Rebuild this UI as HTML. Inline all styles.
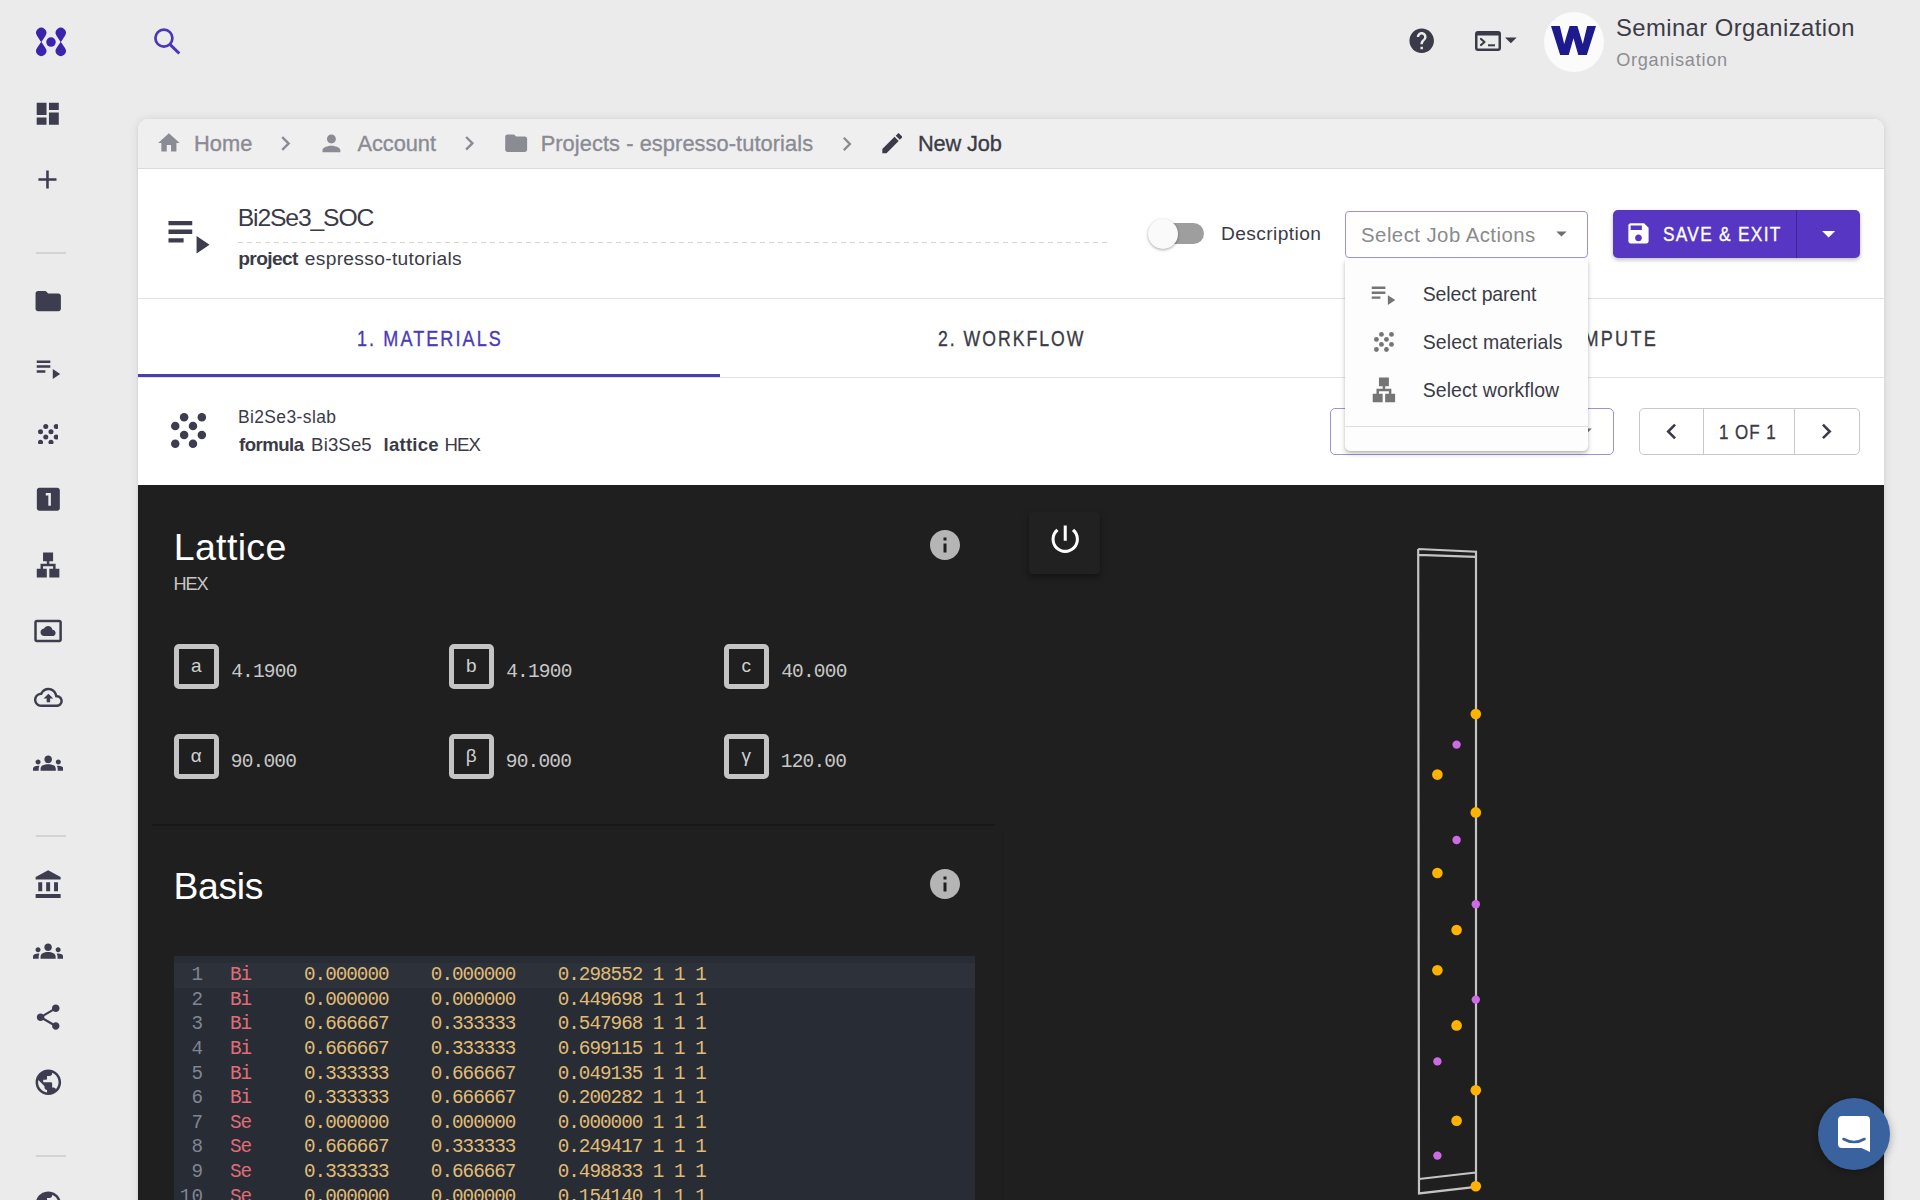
<!DOCTYPE html>
<html><head><meta charset="utf-8">
<style>
html,body{margin:0;padding:0;}
body{width:1920px;height:1200px;overflow:hidden;background:#ebebeb;position:relative;font-family:'Liberation Sans',sans-serif;}
.t{position:absolute;white-space:pre;line-height:1;}
.ic{position:absolute;display:block;}
.abs{position:absolute;}
#card{position:absolute;left:138px;top:119px;width:1746px;height:1100px;background:#fff;border-radius:10px 10px 0 0;box-shadow:0 0 10px rgba(0,0,0,0.10),0 1px 3px rgba(0,0,0,0.06);overflow:hidden;}
#crumb{position:absolute;left:0;top:0;width:1746px;height:49px;background:#efeff0;border-bottom:1px solid #dadada;}
#hdr{position:absolute;left:0;top:50px;width:1746px;height:129px;background:#fff;border-bottom:1px solid #e2e2e2;}
#tabs{position:absolute;left:0;top:180px;width:1746px;height:78px;background:#fff;border-bottom:1px solid #e2e2e2;}
#tabline{position:absolute;left:0;top:255px;width:582px;height:3px;background:#4b3bb5;}
#dark{position:absolute;left:0;top:366px;width:1746px;height:734px;background:#1f1f1f;}
.lbox{position:absolute;width:34.6px;height:34.6px;border:5px solid #c4c4c4;border-radius:5px;color:#d0d0d0;font:19px/34px 'Liberation Sans',sans-serif;text-align:center;}
.cl{position:absolute;left:174px;height:24.6px;white-space:pre;font-family:'Liberation Mono',monospace;font-size:19.3px;letter-spacing:-1.0px;line-height:24.6px;color:#e0bc76;}
.cl .ln{display:inline-block;width:29px;text-align:right;color:#7f8591;margin-right:27px;letter-spacing:0;}
.cl .el{color:#e06c78;}
</style></head><body>
<div id="card">
  <div id="crumb"></div>
  <div id="hdr"></div>
  <div id="tabs"></div>
  <div id="tabline"></div>
  <div id="dark"></div>
</div>
<!-- dashed line under title -->
<div class="abs" style="left:238px;top:242px;width:872px;height:1px;background:repeating-linear-gradient(90deg,#d4d4d4 0 5px,transparent 5px 9px);"></div>
<!-- toggle -->
<div class="abs" style="left:1164px;top:223px;width:40px;height:21px;border-radius:11px;background:#9e9e9e;"></div>
<div class="abs" style="left:1148px;top:218.5px;width:30px;height:30px;border-radius:50%;background:#fafafa;box-shadow:0 1px 3px rgba(0,0,0,0.35);"></div>
<!-- select job actions -->
<div class="abs" style="left:1345px;top:210.5px;width:241px;height:45px;border:1px solid #9b92dc;border-radius:4px;"></div>
<!-- save button -->
<div class="abs" style="left:1612.5px;top:210px;width:247px;height:47.5px;border-radius:5px;background:#5636c2;box-shadow:0 2px 4px rgba(0,0,0,0.25);"></div>
<div class="abs" style="left:1796px;top:210px;width:1px;height:47.5px;background:#3e2596;"></div>
<!-- material select + pagination -->
<div class="abs" style="left:1329.5px;top:407.5px;width:282px;height:45px;border:1px solid #9b92dc;border-radius:5px;"></div>
<div class="abs" style="left:1638.5px;top:407.5px;width:219px;height:45px;border:1px solid #c9c9c9;border-radius:5px;"></div>
<div class="abs" style="left:1703px;top:408px;width:1px;height:46px;background:#c9c9c9;"></div>
<div class="abs" style="left:1794px;top:408px;width:1px;height:46px;background:#c9c9c9;"></div>
<!-- divider dark -->
<div class="abs" style="left:152px;top:824px;width:843px;height:2px;background:#181818;"></div>
<div class="abs" style="left:1002px;top:830px;width:1px;height:370px;background:#1c1c1c;"></div>
<!-- code bg -->
<div class="abs" style="left:174px;top:956px;width:801px;height:260px;background:#282c34;"></div>
<div class="abs" style="left:174px;top:963px;width:801px;height:25px;background:#2c313a;"></div>
<div class="cl" style="top:963.25px"><span class="ln">1</span><span class="el">Bi</span>     <span class="nm">0.000000    0.000000    0.298552 1 1 1</span></div>
<div class="cl" style="top:987.85px"><span class="ln">2</span><span class="el">Bi</span>     <span class="nm">0.000000    0.000000    0.449698 1 1 1</span></div>
<div class="cl" style="top:1012.45px"><span class="ln">3</span><span class="el">Bi</span>     <span class="nm">0.666667    0.333333    0.547968 1 1 1</span></div>
<div class="cl" style="top:1037.05px"><span class="ln">4</span><span class="el">Bi</span>     <span class="nm">0.666667    0.333333    0.699115 1 1 1</span></div>
<div class="cl" style="top:1061.65px"><span class="ln">5</span><span class="el">Bi</span>     <span class="nm">0.333333    0.666667    0.049135 1 1 1</span></div>
<div class="cl" style="top:1086.25px"><span class="ln">6</span><span class="el">Bi</span>     <span class="nm">0.333333    0.666667    0.200282 1 1 1</span></div>
<div class="cl" style="top:1110.85px"><span class="ln">7</span><span class="el">Se</span>     <span class="nm">0.000000    0.000000    0.000000 1 1 1</span></div>
<div class="cl" style="top:1135.45px"><span class="ln">8</span><span class="el">Se</span>     <span class="nm">0.666667    0.333333    0.249417 1 1 1</span></div>
<div class="cl" style="top:1160.05px"><span class="ln">9</span><span class="el">Se</span>     <span class="nm">0.333333    0.666667    0.498833 1 1 1</span></div>
<div class="cl" style="top:1184.65px"><span class="ln">10</span><span class="el">Se</span>     <span class="nm">0.000000    0.000000    0.154140 1 1 1</span></div>
<div class="cl" style="top:1209.25px"><span class="ln">11</span><span class="el">Se</span>     <span class="nm">0.666667    0.333333    0.403556 1 1 1</span></div>
<!-- info icons bg -->
<!-- power button -->
<div class="abs" style="left:1029px;top:512px;width:71px;height:62px;border-radius:4px;background:#212121;box-shadow:0 3px 6px rgba(0,0,0,0.4);"></div>
<svg class="ic" style="left:33.37px;top:99.27px;width:29.47px;height:29.47px;" viewBox="0 0 24 24"><path fill="#3d3d4f" d="M3 13h8V3H3v10zm0 8h8v-6H3v6zm10 0h8V11h-8v10zm0-18v6h8V3h-8z"/></svg>
<svg class="ic" style="left:32.43px;top:164.28px;width:30.94px;height:30.94px;" viewBox="0 0 24 24"><path fill="#3d3d4f" d="M19 13h-6v6h-2v-6H5v-2h6V5h2v6h6v2z"/></svg>
<svg class="ic" style="left:32.65px;top:286.02px;width:30.45px;height:30.45px;" viewBox="0 0 24 24"><path fill="#3d3d4f" d="M10 4H4c-1.1 0-1.99.9-1.99 2L2 18c0 1.1.9 2 2 2h16c1.1 0 2-.9 2-2V8c0-1.1-.9-2-2-2h-8l-2-2z"/></svg>
<svg class="ic" style="left:32.91px;top:352.68px;width:29.68px;height:29.68px;" viewBox="0 0 24 24"><path fill="#3d3d4f" d="M3 10h11v2H3zm0-4h11v2H3zm0 8h7v2H3zm13-1v8l6-4z"/></svg>
<svg class="ic" style="left:32.79px;top:484.04px;width:30.67px;height:30.67px;" viewBox="0 0 24 24"><path fill="#3d3d4f" d="M19 3H5c-1.1 0-2 .9-2 2v14c0 1.1.9 2 2 2h14c1.1 0 2-.9 2-2V5c0-1.1-.9-2-2-2zm-5 14h-2V9h-2V7h4v10z"/></svg>
<svg class="ic" style="left:33.06px;top:550.18px;width:30.13px;height:30.13px;" viewBox="0 0 24 24"><path fill="#3d3d4f" d="M13 22h8v-7h-3v-4h-5V9h3V2H8v7h3v2H6v4H3v7h8v-7H8v-2h8v2h-3z"/></svg>
<svg class="ic" style="left:33.06px;top:616.18px;width:30.14px;height:30.14px;" viewBox="0 0 24 24"><path fill="#3d3d4f" d="M9 16h6.5c1.38 0 2.5-1.12 2.5-2.5S16.88 11 15.5 11h-.05c-.24-1.69-1.69-3-3.45-3-1.4 0-2.6.83-3.16 2.02h-.16C7.17 10.18 6 11.45 6 13c0 1.66 1.34 3 3 3zM21 3H3c-1.11 0-2 .89-2 2v14c0 1.11.89 2 2 2h18c1.11 0 2-.89 2-2V5c0-1.11-.89-2-2-2zm0 16.01H3V4.99h18v14.02z"/></svg>
<svg class="ic" style="left:33.72px;top:682.72px;width:28.81px;height:28.81px;" viewBox="0 0 24 24"><path fill="#3d3d4f" d="M19.35 10.04C18.67 6.59 15.64 4 12 4 9.11 4 6.6 5.64 5.35 8.04 2.34 8.36 0 10.91 0 14c0 3.31 2.69 6 6 6h13c2.76 0 5-2.24 5-5 0-2.64-2.05-4.78-4.65-4.96zM19 18H6c-2.21 0-4-1.79-4-4 0-2.05 1.530-3.76 3.56-3.97l1.07-.11.5-.95C8.080 7.14 9.940 6 12 6c2.62 0 4.88 1.86 5.39 4.43l.3 1.5 1.53.11c1.56.1 2.78 1.41 2.78 2.96 0 1.65-1.35 3-3 3zM8 13h2.55v3h2.9v-3H16l-4-4z"/></svg>
<svg class="ic" style="left:32.69px;top:747.81px;width:30.38px;height:30.38px;" viewBox="0 0 24 24"><path fill="#3d3d4f" d="M12 12.75c1.63 0 3.07.39 4.24.9 1.08.48 1.76 1.56 1.76 2.730V18H6v-1.61c0-1.18.68-2.26 1.76-2.73 1.17-.52 2.61-.91 4.24-.91zM4 13c1.1 0 2-.9 2-2s-.9-2-2-2-2 .9-2 2 .9 2 2 2zm1.13 1.1c-.37-.06-.74-.1-1.13-.1-.99 0-1.93.21-2.78.58C.48 14.9 0 15.62 0 16.43V18h4.5v-1.61c0-.83.23-1.61.63-2.29zM20 13c1.1 0 2-.9 2-2s-.9-2-2-2-2 .9-2 2 .9 2 2 2zm4 3.43c0-.81-.48-1.53-1.22-1.85-.85-.37-1.79-.58-2.78-.58-.39 0-.76.04-1.13.1.4.68.63 1.46.63 2.29V18H24v-1.57zM12 6c1.66 0 3 1.34 3 3s-1.34 3-3 3-3-1.34-3-3 1.34-3 3-3z"/></svg>
<svg class="ic" style="left:33.22px;top:868.97px;width:31.58px;height:31.58px;" viewBox="0 0 24 24"><path fill="#3d3d4f" d="M4 10v7h3v-7H4zm6 0v7h3v-7h-3zM2 22h19v-3H2v3zm14-12v7h3v-7h-3zm-4.5-9L2 6v2h19V6l-9.5-5z"/></svg>
<svg class="ic" style="left:32.80px;top:935.80px;width:30.20px;height:30.20px;" viewBox="0 0 24 24"><path fill="#3d3d4f" d="M12 12.75c1.63 0 3.07.39 4.24.9 1.08.48 1.76 1.56 1.76 2.730V18H6v-1.61c0-1.18.68-2.26 1.76-2.73 1.17-.52 2.61-.91 4.24-.91zM4 13c1.1 0 2-.9 2-2s-.9-2-2-2-2 .9-2 2 .9 2 2 2zm1.13 1.1c-.37-.06-.74-.1-1.13-.1-.99 0-1.93.21-2.78.58C.48 14.9 0 15.62 0 16.43V18h4.5v-1.61c0-.83.23-1.61.63-2.29zM20 13c1.1 0 2-.9 2-2s-.9-2-2-2-2 .9-2 2 .9 2 2 2zm4 3.43c0-.81-.48-1.53-1.22-1.85-.85-.37-1.79-.58-2.78-.58-.39 0-.76.04-1.13.1.4.68.63 1.46.63 2.29V18H24v-1.57zM12 6c1.66 0 3 1.34 3 3s-1.34 3-3 3-3-1.34-3-3 1.34-3 3-3z"/></svg>
<svg class="ic" style="left:32.86px;top:1001.51px;width:30.37px;height:30.37px;" viewBox="0 0 24 24"><path fill="#3d3d4f" d="M18 16.08c-.76 0-1.44.3-1.96.77L8.91 12.7c.05-.23.09-.46.09-.7s-.04-.47-.09-.7l7.05-4.11c.54.5 1.25.81 2.04.81 1.66 0 3-1.34 3-3s-1.34-3-3-3-3 1.34-3 3c0 .24.04.47.09.7L8.04 9.81C7.5 9.31 6.79 9 6 9c-1.66 0-3 1.34-3 3s1.34 3 3 3c.79 0 1.5-.31 2.04-.81l7.12 4.16c-.05.21-.08.43-.08.65 0 1.61 1.31 2.92 2.92 2.92 1.61 0 2.92-1.31 2.92-2.92s-1.31-2.92-2.92-2.92z"/></svg>
<svg class="ic" style="left:32.57px;top:1066.82px;width:30.66px;height:30.66px;" viewBox="0 0 24 24"><path fill="#3d3d4f" d="M12 2C6.48 2 2 6.48 2 12s4.48 10 10 10 10-4.48 10-10S17.52 2 12 2zm-1 17.93c-3.95-.49-7-3.850-7-7.93 0-.62.08-1.21.21-1.79L9 15v1c0 1.1.9 2 2 2v1.93zm6.9-2.54c-.26-.81-1-1.39-1.9-1.39h-1v-3c0-.55-.45-1-1-1H8v-2h2c.55 0 1-.45 1-1V7h2c1.1 0 2-.9 2-2v-.41c2.93 1.19 5 4.06 5 7.41 0 2.08-.8 3.97-2.1 5.39z"/></svg>
<svg class="ic" style="left:32.57px;top:1188.52px;width:30.66px;height:30.66px;" viewBox="0 0 24 24"><path fill="#3d3d4f" d="M12 2C6.48 2 2 6.48 2 12s4.48 10 10 10 10-4.48 10-10S17.52 2 12 2zm-1 17.93c-3.95-.49-7-3.850-7-7.93 0-.62.08-1.21.21-1.79L9 15v1c0 1.1.9 2 2 2v1.93zm6.9-2.54c-.26-.81-1-1.39-1.9-1.39h-1v-3c0-.55-.45-1-1-1H8v-2h2c.55 0 1-.45 1-1V7h2c1.1 0 2-.9 2-2v-.41c2.93 1.19 5 4.06 5 7.41 0 2.08-.8 3.97-2.1 5.39z"/></svg>
<div class="abs" style="left:36px;top:252px;width:30px;height:1.5px;background:#d3d3d3"></div>
<div class="abs" style="left:36px;top:835px;width:30px;height:1.5px;background:#d3d3d3"></div>
<div class="abs" style="left:36px;top:1155px;width:30px;height:1.5px;background:#d3d3d3"></div>
<svg class="ic" style="left:37.50px;top:423.50px;width:20.75px;height:20.75px" viewBox="0 0 35.1 35.1"><circle cx="13.12" cy="4.25" r="4.25" fill="#3d3d4f"/><circle cx="30.85" cy="4.25" r="4.25" fill="#3d3d4f"/><circle cx="4.25" cy="13.12" r="4.25" fill="#3d3d4f"/><circle cx="21.98" cy="13.12" r="4.25" fill="#3d3d4f"/><circle cx="13.12" cy="21.98" r="4.25" fill="#3d3d4f"/><circle cx="30.85" cy="21.98" r="4.25" fill="#3d3d4f"/><circle cx="4.25" cy="30.85" r="4.25" fill="#3d3d4f"/><circle cx="21.98" cy="30.85" r="4.25" fill="#3d3d4f"/></svg>
<svg class="ic" style="left:170.75px;top:413.45px;width:35.10px;height:35.10px" viewBox="0 0 35.1 35.1"><circle cx="13.12" cy="4.25" r="4.25" fill="#3d3d4f"/><circle cx="30.85" cy="4.25" r="4.25" fill="#3d3d4f"/><circle cx="4.25" cy="13.12" r="4.25" fill="#3d3d4f"/><circle cx="21.98" cy="13.12" r="4.25" fill="#3d3d4f"/><circle cx="13.12" cy="21.98" r="4.25" fill="#3d3d4f"/><circle cx="30.85" cy="21.98" r="4.25" fill="#3d3d4f"/><circle cx="4.25" cy="30.85" r="4.25" fill="#3d3d4f"/><circle cx="21.98" cy="30.85" r="4.25" fill="#3d3d4f"/></svg>
<svg class="ic" style="left:34px;top:26px;width:34px;height:32px" viewBox="0 0 34 32">
<g fill="#3b23ad">
<path d="M7.25 16.2 L3.02 9.75 A5.1 5.1 0 1 1 11.48 9.75 Z"/>
<path d="M7.25 15.8 L3.02 22.05 A5.1 5.1 0 1 0 11.48 22.05 Z"/>
<path d="M26.75 16.2 L22.52 9.75 A5.1 5.1 0 1 1 30.98 9.75 Z"/>
<path d="M26.75 15.8 L22.52 22.05 A5.1 5.1 0 1 0 30.98 22.05 Z"/>
<circle cx="17" cy="16.1" r="4.75"/>
</g></svg>
<svg class="ic" style="left:140px;top:20px;width:50px;height:45px" viewBox="140 20 50 45"><circle cx="163.9" cy="38.1" r="8.5" fill="none" stroke="#4a35bd" stroke-width="2.7"/><path d="M170.2 44.6L179.3 53.5" stroke="#4a35bd" stroke-width="3"/></svg>
<svg class="ic" style="left:1407.10px;top:25.60px;width:29.40px;height:29.40px;" viewBox="0 0 24 24"><path fill="#3a3a48" d="M12 2C6.48 2 2 6.48 2 12s4.48 10 10 10 10-4.48 10-10S17.52 2 12 2zm1 17h-2v-2h2v2zm2.07-7.75l-.9.92C13.45 12.9 13 13.5 13 15h-2v-.5c0-1.1.45-2.1 1.17-2.83l1.24-1.26c.37-.36.59-.86.59-1.41 0-1.1-.9-2-2-2s-2 .9-2 2H8c0-2.21 1.79-4 4-4s4 1.79 4 4c0 .88-.36 1.68-.93 2.25z"/></svg>
<svg class="ic" style="left:1475px;top:30.5px;width:26px;height:20px" viewBox="0 0 26 20">
<path fill="#3a3a48" d="M3 0H23A3 3 0 0 1 26 3V17A3 3 0 0 1 23 20H3A3 3 0 0 1 0 17V3A3 3 0 0 1 3 0ZM2.5 4.5V17A.5.5 0 0 0 3 17.5H23A.5.5 0 0 0 23.5 17V4.5Z"/>
<path fill="none" stroke="#3a3a48" stroke-width="2.2" stroke-linecap="round" stroke-linejoin="round" d="M6 8L9.5 11L6 14"/>
<rect x="13" y="13.3" width="7" height="2" fill="#3a3a48"/>
</svg>
<svg class="ic" style="left:1497.39px;top:26.46px;width:27.72px;height:27.72px;" viewBox="0 0 24 24"><path fill="#3a3a48" d="M7 10l5 5 5-5z"/></svg>
<div class="abs" style="left:1544px;top:12px;width:60px;height:60px;border-radius:50%;background:#fbfbfb;"></div>
<svg class="ic" style="left:1551px;top:25.6px;width:45px;height:29.4px" viewBox="0 0 46 31" preserveAspectRatio="none">
<path fill="#1d1a8e" d="M0 0H9L13.5 19L19 0H27L32.5 19L37 0H46L36.5 31H28L23 13L18 31H9.5Z"/></svg>
<svg class="ic" style="left:156.30px;top:129.99px;width:25.80px;height:25.80px;" viewBox="0 0 24 24"><path fill="#8b8b93" d="M10 20v-6h4v6h5v-8h3L12 3 2 12h3v8z"/></svg>
<svg class="ic" style="left:318.22px;top:129.52px;width:26.85px;height:26.85px;" viewBox="0 0 24 24"><path fill="#8b8b93" d="M12 12c2.21 0 4-1.79 4-4s-1.79-4-4-4-4 1.79-4 4 1.79 4 4 4zm0 2c-2.67 0-8 1.34-8 4v2h16v-2c0-2.66-5.33-4-8-4z"/></svg>
<svg class="ic" style="left:270.54px;top:129.25px;width:29.00px;height:29.00px;" viewBox="0 0 24 24"><path fill="#8b8b93" d="M10 6L8.59 7.41 13.17 12l-4.58 4.59L10 18l6-6z"/></svg>
<svg class="ic" style="left:454.81px;top:129.41px;width:28.67px;height:28.67px;" viewBox="0 0 24 24"><path fill="#8b8b93" d="M10 6L8.59 7.41 13.17 12l-4.58 4.59L10 18l6-6z"/></svg>
<svg class="ic" style="left:502.84px;top:130.09px;width:26.33px;height:26.33px;" viewBox="0 0 24 24"><path fill="#8b8b93" d="M10 4H4c-1.1 0-1.99.9-1.99 2L2 18c0 1.1.9 2 2 2h16c1.1 0 2-.9 2-2V8c0-1.1-.9-2-2-2h-8l-2-2z"/></svg>
<svg class="ic" style="left:832.97px;top:129.82px;width:27.87px;height:27.87px;" viewBox="0 0 24 24"><path fill="#8b8b93" d="M10 6L8.59 7.41 13.17 12l-4.58 4.59L10 18l6-6z"/></svg>
<svg class="ic" style="left:879.43px;top:129.73px;width:26.53px;height:26.53px;" viewBox="0 0 24 24"><path fill="#3b3b47" d="M3 17.25V21h3.75L17.81 9.94l-3.75-3.75L3 17.25zM20.71 7.04c.39-.39.39-1.02 0-1.41l-2.34-2.34c-.39-.39-1.02-.39-1.41 0l-1.83 1.830 3.75 3.75 1.83-1.83z"/></svg>
<svg class="ic" style="left:162.19px;top:207.98px;width:51.86px;height:51.86px;" viewBox="0 0 24 24"><path fill="#3d3d4f" d="M3 10h11v2H3zm0-4h11v2H3zm0 8h7v2H3zm13-1v8l6-4z"/></svg>
<svg class="ic" style="left:1549.02px;top:221.15px;width:24.96px;height:24.96px;" viewBox="0 0 24 24"><path fill="#6e6e74" d="M7 10l5 5 5-5z"/></svg>
<svg class="ic" style="left:1624.62px;top:220.34px;width:26.97px;height:26.97px;" viewBox="0 0 24 24"><path fill="#ffffff" d="M17 3H5c-1.11 0-2 .9-2 2v14c0 1.1.89 2 2 2h14c1.1 0 2-.9 2-2V7l-4-4zm-5 16c-1.66 0-3-1.34-3-3s1.34-3 3-3 3 1.34 3 3-1.34 3-3 3zm3-10H5V5h10v4z"/></svg>
<svg class="ic" style="left:1812.79px;top:217.94px;width:31.32px;height:31.32px;" viewBox="0 0 24 24"><path fill="#ffffff" d="M7 10l5 5 5-5z"/></svg>
<svg class="ic" style="left:1573.90px;top:418.38px;width:25.20px;height:25.20px;" viewBox="0 0 24 24"><path fill="#6e6e74" d="M7 10l5 5 5-5z"/></svg>
<svg class="ic" style="left:1655.61px;top:415.63px;width:31.15px;height:31.15px;" viewBox="0 0 24 24"><path fill="#3b3b47" d="M15.41 7.41L14 6l-6 6 6 6 1.41-1.41L10.83 12z"/></svg>
<svg class="ic" style="left:1811.41px;top:415.79px;width:30.82px;height:30.82px;" viewBox="0 0 24 24"><path fill="#3b3b47" d="M10 6L8.59 7.41 13.17 12l-4.58 4.59L10 18l6-6z"/></svg>
<svg class="ic" style="left:927.00px;top:527.00px;width:36.00px;height:36.00px;" viewBox="0 0 24 24"><path fill="#b5b5b5" d="M12 2C6.48 2 2 6.48 2 12s4.48 10 10 10 10-4.48 10-10S17.52 2 12 2zm1 15h-2v-6h2v6zm0-8h-2V7h2v2z"/></svg>
<svg class="ic" style="left:927.00px;top:866.00px;width:36.00px;height:36.00px;" viewBox="0 0 24 24"><path fill="#b5b5b5" d="M12 2C6.48 2 2 6.48 2 12s4.48 10 10 10 10-4.48 10-10S17.52 2 12 2zm1 15h-2v-6h2v6zm0-8h-2V7h2v2z"/></svg>
<svg class="ic" style="left:1046.57px;top:521.12px;width:36.47px;height:36.47px;" viewBox="0 0 24 24"><path fill="#ffffff" d="M13 3h-2v10h2V3zm4.83 2.17l-1.42 1.42C17.99 7.86 19 9.81 19 12c0 3.87-3.13 7-7 7s-7-3.13-7-7c0-2.19 1.01-4.14 2.58-5.42L6.17 5.17C4.23 6.82 3 9.260 3 12c0 4.97 4.03 9 9 9s9-4.03 9-9c0-2.74-1.23-5.18-3.17-6.83z"/></svg>
<div class="t" style="left:1615.93px;top:16.00px;font-family:'Liberation Sans',sans-serif;font-size:23.84px;font-weight:normal;letter-spacing:0.427px;color:#3b3b47;">Seminar Organization</div>
<div class="t" style="left:1616.18px;top:51.00px;font-family:'Liberation Sans',sans-serif;font-size:18.17px;font-weight:normal;letter-spacing:0.726px;color:#8d8d92;">Organisation</div>
<div class="t" style="left:194.06px;top:133.00px;font-family:'Liberation Sans',sans-serif;font-size:21.80px;font-weight:normal;letter-spacing:0.041px;color:#8b8b93;-webkit-text-stroke:0.35px currentColor;">Home</div>
<div class="t" style="left:357.50px;top:133.00px;font-family:'Liberation Sans',sans-serif;font-size:21.80px;font-weight:normal;letter-spacing:-0.050px;color:#8b8b93;-webkit-text-stroke:0.35px currentColor;">Account</div>
<div class="t" style="left:540.66px;top:133.00px;font-family:'Liberation Sans',sans-serif;font-size:21.80px;font-weight:normal;letter-spacing:0.081px;color:#8b8b93;-webkit-text-stroke:0.35px currentColor;">Projects - espresso-tutorials</div>
<div class="t" style="left:917.96px;top:133.00px;font-family:'Liberation Sans',sans-serif;font-size:21.80px;font-weight:normal;letter-spacing:-0.149px;color:#3b3b47;-webkit-text-stroke:0.35px currentColor;">New Job</div>
<div class="t" style="left:237.72px;top:206.00px;font-family:'Liberation Sans',sans-serif;font-size:24.71px;font-weight:normal;letter-spacing:-1.151px;color:#3b3b47;">Bi2Se3_SOC</div>
<div class="t" style="left:238.25px;top:249.00px;font-family:'Liberation Sans',sans-serif;font-size:19.19px;font-weight:bold;letter-spacing:-0.625px;color:#3b3b47;">project</div>
<div class="t" style="left:304.73px;top:249.00px;font-family:'Liberation Sans',sans-serif;font-size:19.19px;font-weight:normal;letter-spacing:0.327px;color:#3b3b47;">espresso-tutorials</div>
<div class="t" style="left:1220.97px;top:224.00px;font-family:'Liberation Sans',sans-serif;font-size:19.19px;font-weight:normal;letter-spacing:0.405px;color:#3b3b47;">Description</div>
<div class="t" style="left:1361.08px;top:225.00px;font-family:'Liberation Sans',sans-serif;font-size:20.35px;font-weight:normal;letter-spacing:0.458px;color:#8a8a8e;">Select Job Actions</div>
<div class="t" style="left:1662.97px;top:224.00px;font-family:'Liberation Sans',sans-serif;font-size:20.35px;font-weight:normal;letter-spacing:1.518px;color:#ffffff;transform:scaleX(0.85);transform-origin:0 0;-webkit-text-stroke:0.35px currentColor;">SAVE &amp; EXIT</div>
<div class="t" style="left:356.94px;top:329.00px;font-family:'Liberation Sans',sans-serif;font-size:21.51px;font-weight:normal;letter-spacing:2.458px;color:#4b3bb5;transform:scaleX(0.84);transform-origin:0 0;-webkit-text-stroke:0.35px currentColor;">1. MATERIALS</div>
<div class="t" style="left:937.72px;top:329.00px;font-family:'Liberation Sans',sans-serif;font-size:21.51px;font-weight:normal;letter-spacing:2.435px;color:#3b3b47;transform:scaleX(0.82);transform-origin:0 0;-webkit-text-stroke:0.35px currentColor;">2. WORKFLOW</div>
<div class="t" style="left:1525.28px;top:329.00px;font-family:'Liberation Sans',sans-serif;font-size:21.51px;font-weight:normal;letter-spacing:2.690px;color:#3b3b47;transform:scaleX(0.84);transform-origin:0 0;-webkit-text-stroke:0.35px currentColor;">3. COMPUTE</div>
<div class="t" style="left:237.90px;top:409.00px;font-family:'Liberation Sans',sans-serif;font-size:17.44px;font-weight:normal;letter-spacing:0.408px;color:#3b3b47;">Bi2Se3-slab</div>
<div class="t" style="left:239.02px;top:436.00px;font-family:'Liberation Sans',sans-serif;font-size:18.60px;font-weight:bold;letter-spacing:-0.516px;color:#3b3b47;">formula</div>
<div class="t" style="left:311.11px;top:436.00px;font-family:'Liberation Sans',sans-serif;font-size:18.60px;font-weight:normal;letter-spacing:0.127px;color:#3b3b47;">Bi3Se5</div>
<div class="t" style="left:383.60px;top:436.00px;font-family:'Liberation Sans',sans-serif;font-size:18.60px;font-weight:bold;letter-spacing:0.214px;color:#3b3b47;">lattice</div>
<div class="t" style="left:444.51px;top:436.00px;font-family:'Liberation Sans',sans-serif;font-size:18.60px;font-weight:normal;letter-spacing:-0.936px;color:#3b3b47;">HEX</div>
<div class="t" style="left:1719.33px;top:422.00px;font-family:'Liberation Sans',sans-serif;font-size:19.99px;font-weight:normal;letter-spacing:1.139px;color:#3b3b47;transform:scaleX(0.85);transform-origin:0 0;-webkit-text-stroke:0.35px currentColor;">1 OF 1</div>
<div class="t" style="left:173.70px;top:529.00px;font-family:'Liberation Sans',sans-serif;font-size:37.50px;font-weight:normal;letter-spacing:0.358px;color:#ffffff;">Lattice</div>
<div class="t" style="left:173.55px;top:575.00px;font-family:'Liberation Sans',sans-serif;font-size:18.17px;font-weight:normal;letter-spacing:-1.110px;color:#c6c6c6;">HEX</div>
<div class="t" style="left:173.41px;top:868.00px;font-family:'Liberation Sans',sans-serif;font-size:37.35px;font-weight:normal;letter-spacing:-0.309px;color:#ffffff;">Basis</div>
<div class="lbox" style="left:174px;top:644px">a</div>
<div class="t" style="left:231.22px;top:663.00px;font-family:'Liberation Mono',monospace;font-size:19.50px;font-weight:normal;letter-spacing:0.000px;color:#c8c8c8;letter-spacing:-0.82px">4.1900</div>
<div class="lbox" style="left:449px;top:644px">b</div>
<div class="t" style="left:506.22px;top:663.00px;font-family:'Liberation Mono',monospace;font-size:19.50px;font-weight:normal;letter-spacing:0.000px;color:#c8c8c8;letter-spacing:-0.82px">4.1900</div>
<div class="lbox" style="left:724px;top:644px">c</div>
<div class="t" style="left:781.23px;top:663.00px;font-family:'Liberation Mono',monospace;font-size:19.50px;font-weight:normal;letter-spacing:0.000px;color:#c8c8c8;letter-spacing:-0.82px">40.000</div>
<div class="lbox" style="left:174px;top:734px">α</div>
<div class="t" style="left:230.83px;top:753.00px;font-family:'Liberation Mono',monospace;font-size:19.50px;font-weight:normal;letter-spacing:0.000px;color:#c8c8c8;letter-spacing:-0.82px">90.000</div>
<div class="lbox" style="left:449px;top:734px">β</div>
<div class="t" style="left:505.83px;top:753.00px;font-family:'Liberation Mono',monospace;font-size:19.50px;font-weight:normal;letter-spacing:0.000px;color:#c8c8c8;letter-spacing:-0.82px">90.000</div>
<div class="lbox" style="left:724px;top:734px">γ</div>
<div class="t" style="left:780.84px;top:753.00px;font-family:'Liberation Mono',monospace;font-size:19.50px;font-weight:normal;letter-spacing:0.000px;color:#c8c8c8;letter-spacing:-0.82px">120.00</div>
<div class="abs" style="left:1345px;top:259px;width:243px;height:192px;background:#fdfdfd;border-radius:0 0 5px 5px;box-shadow:0 3px 5px rgba(0,0,0,0.22),0 1px 2px rgba(0,0,0,0.1);"></div>
<div class="abs" style="left:1345px;top:426px;width:243px;height:1px;background:#dedede;"></div>
<svg class="ic" style="left:1368.48px;top:278.69px;width:29.80px;height:29.80px;" viewBox="0 0 24 24"><path fill="#757575" d="M3 10h11v2H3zm0-4h11v2H3zm0 8h7v2H3zm13-1v8l6-4z"/></svg>
<svg class="ic" style="left:1373.90px;top:332.00px;width:19.90px;height:19.90px" viewBox="0 0 35.1 35.1"><circle cx="13.12" cy="4.25" r="4.25" fill="#757575"/><circle cx="30.85" cy="4.25" r="4.25" fill="#757575"/><circle cx="4.25" cy="13.12" r="4.25" fill="#757575"/><circle cx="21.98" cy="13.12" r="4.25" fill="#757575"/><circle cx="13.12" cy="21.98" r="4.25" fill="#757575"/><circle cx="30.85" cy="21.98" r="4.25" fill="#757575"/><circle cx="4.25" cy="30.85" r="4.25" fill="#757575"/><circle cx="21.98" cy="30.85" r="4.25" fill="#757575"/></svg>
<svg class="ic" style="left:1368.91px;top:375.04px;width:29.83px;height:29.83px;" viewBox="0 0 24 24"><path fill="#757575" d="M13 22h8v-7h-3v-4h-5V9h3V2H8v7h3v2H6v4H3v7h8v-7H8v-2h8v2h-3z"/></svg>
<div class="t" style="left:1422.72px;top:285.00px;font-family:'Liberation Sans',sans-serif;font-size:19.48px;font-weight:normal;letter-spacing:-0.087px;color:#3b3b47;">Select parent</div>
<div class="t" style="left:1422.72px;top:333.00px;font-family:'Liberation Sans',sans-serif;font-size:19.48px;font-weight:normal;letter-spacing:0.092px;color:#3b3b47;">Select materials</div>
<div class="t" style="left:1422.72px;top:381.00px;font-family:'Liberation Sans',sans-serif;font-size:19.48px;font-weight:normal;letter-spacing:0.087px;color:#3b3b47;">Select workflow</div>
<div class="abs" style="left:1818px;top:1098px;width:72px;height:72px;border-radius:50%;background:#3a629e;box-shadow:0 2px 8px rgba(0,0,0,0.3);"></div>
<svg class="ic" style="left:1838px;top:1116px;width:33px;height:37px" viewBox="0 0 33 37">
<path fill="#fff" d="M4 0H28A4 4 0 0 1 32 4V36L23.5 32H4A4 4 0 0 1 0 28V4A4 4 0 0 1 4 0Z"/>
<path fill="none" stroke="#3a629e" stroke-width="2.6" stroke-linecap="round" d="M5.5 23Q16 29 26.5 23"/></svg>
<svg class="ic" style="left:1000px;top:485px;width:884px;height:715px" viewBox="1000 485 884 715">
<g fill="none" stroke="#c4c4c4" stroke-width="2.2">
<path d="M1418.2 549 L1476 551.7 L1476 1187 M1418.2 549 L1419 1193.4 L1476 1186.9 M1418.2 554.8 L1476 556.9 M1419 1179 L1475.8 1172.5"/>
</g>
<g fill="#ffb300">
<circle cx="1475.8" cy="714" r="5.3"/><circle cx="1437.4" cy="774.6" r="5.3"/><circle cx="1475.8" cy="812.4" r="5.3"/><circle cx="1437.4" cy="873" r="5.3"/><circle cx="1456.6" cy="930" r="5.3"/><circle cx="1437.4" cy="970.2" r="5.3"/><circle cx="1456.6" cy="1025.4" r="5.3"/><circle cx="1475.8" cy="1090.2" r="5.3"/><circle cx="1456.6" cy="1120.8" r="5.3"/><circle cx="1475.8" cy="1186.2" r="5.3"/>
</g><g fill="#cf6ae6">
<circle cx="1456.6" cy="744.6" r="4.2"/><circle cx="1456.6" cy="840" r="4.2"/><circle cx="1475.8" cy="904.2" r="4.2"/><circle cx="1475.8" cy="999.6" r="4.2"/><circle cx="1437.4" cy="1061.4" r="4.2"/><circle cx="1437.4" cy="1155.6" r="4.2"/>
</g></svg>
</body></html>
